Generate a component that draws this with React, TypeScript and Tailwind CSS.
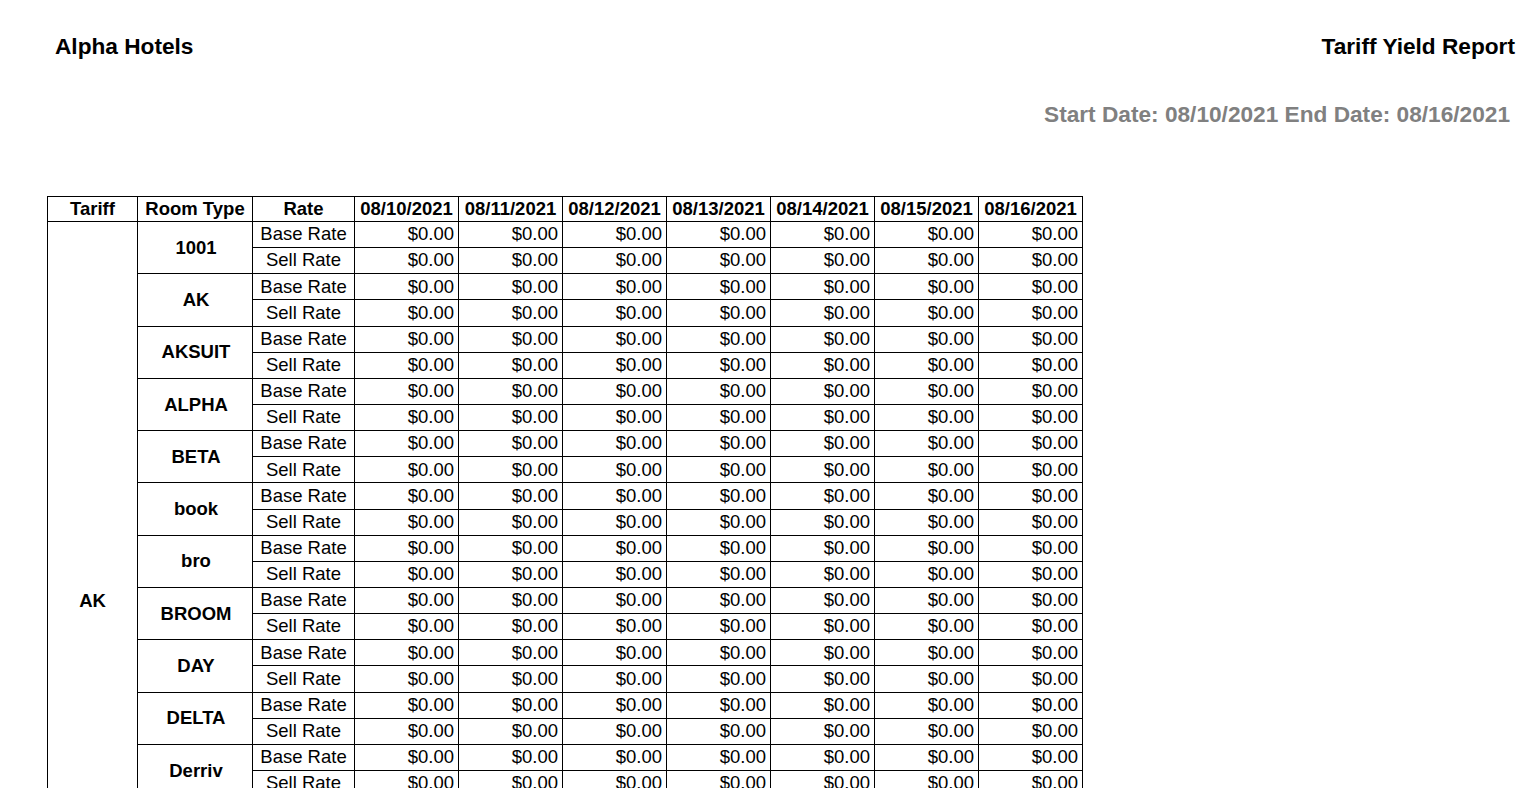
const dates = ["08/10/2021", "08/11/2021", "08/12/2021", "08/13/2021", "08/14/2021", "08/15/2021", "08/16/2021"];
const roomTypes = ["1001", "AK", "AKSUIT", "ALPHA", "BETA", "book", "bro", "BROOM", "DAY", "DELTA", "Derriv", "EPSILON", "GAMMA", "KING", "QUEEN"];
const rates = ["Base Rate", "Sell Rate"];

const cell = "border border-black h-[26.15px] p-0 leading-none";

export default function App() {
  return (
    <div className="bg-white min-h-screen text-black font-['Liberation_Sans',Arial,sans-serif]">
      <div className="flex justify-between items-start pl-[55px] pr-[12px] pt-[33px]">
        <h1 className="text-[22.67px] font-bold leading-[26px]">Alpha Hotels</h1>
        <h1 className="text-[22.67px] font-bold leading-[26px]">Tariff Yield Report</h1>
      </div>
      <div className="flex justify-end pr-[17px] mt-[42px]">
        <p className="text-[22.67px] font-bold leading-[26px] text-[#808080]">
          Start Date: 08/10/2021 End Date: 08/16/2021
        </p>
      </div>
      <div className="pl-[47px] pt-[69px]">
        <table className="border-collapse text-[18.5px]">
          <thead>
            <tr>
              <th className="border border-black h-[25px] p-0 leading-none w-[90px] font-bold text-center">Tariff</th>
              <th className="border border-black h-[25px] p-0 leading-none w-[115px] font-bold text-center">Room Type</th>
              <th className="border border-black h-[25px] p-0 leading-none w-[102px] font-bold text-center">Rate</th>
              {dates.map((d) => (
                <th key={d} className="border border-black h-[25px] p-0 leading-none w-[104px] font-bold text-center">
                  {d}
                </th>
              ))}
            </tr>
          </thead>
          <tbody>
            {roomTypes.map((rt, i) =>
              rates.map((r, j) => (
                <tr key={rt + r}>
                  {i === 0 && j === 0 && (
                    <td rowSpan={roomTypes.length * 2} className="border border-black p-0 pb-[26px] font-bold text-center align-middle">
                      AK
                    </td>
                  )}
                  {j === 0 && (
                    <td rowSpan={2} className="border border-black p-0 pl-[2px] font-bold text-center align-middle">
                      {rt}
                    </td>
                  )}
                  <td className={`${cell} text-center`}>{r}</td>
                  {dates.map((d) => (
                    <td key={d} className={`${cell} text-right pr-[4px]`}>
                      $0.00
                    </td>
                  ))}
                </tr>
              ))
            )}
          </tbody>
        </table>
      </div>
    </div>
  );
}
